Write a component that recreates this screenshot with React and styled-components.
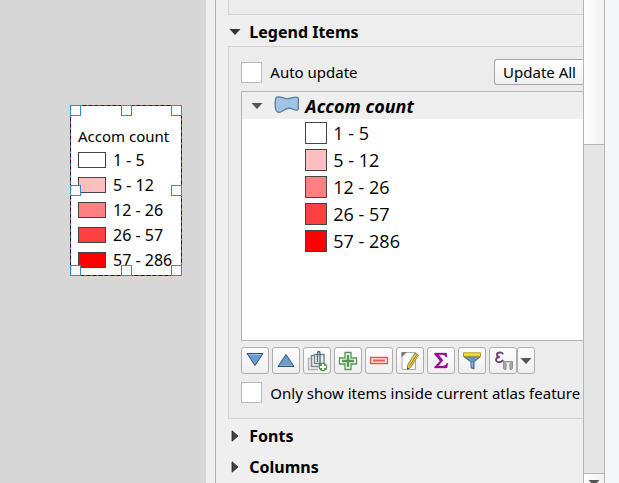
import React, { useState } from "react";
import styled, { createGlobalStyle } from "styled-components";

const Global = createGlobalStyle`
  *, *::before, *::after { box-sizing: border-box; }
  body {
    margin: 0;
    background: #efefef;
    color: #000;
    font: 15px/20px "Noto Sans", "Open Sans", sans-serif;
  }
  button, input { font: inherit; color: inherit; margin: 0; }
`;

const Shell = styled.div`
  display: grid;
  grid-template-columns: minmax(0, 1fr) minmax(0, 2fr);
  height: 100vh;
  overflow: hidden;
`;

const Canvas = styled.main`
  position: relative;
  background: #d7d7d7;
`;

const LegendFrame = styled.section`
  position: absolute;
  left: 70px;
  top: 105px;
  width: 112px;
  padding: 21px 0 4px 8px;
  background: #fff;
`;

const FrameOutline = styled.svg`
  position: absolute;
  inset: 0;
  width: 100%;
  height: 100%;
`;

const Handle = styled.span`
  position: absolute;
  width: 11px;
  height: 11px;
  background: #fff;
  border: 1px solid #2d8fc4;
  ${(p) => ({ left: "left: 0;", center: "left: 51px;", right: "right: 0;" })[p.$x]}
  ${(p) => ({ top: "top: 0;", middle: "top: 80px;", bottom: "bottom: 0;" })[p.$y]}
`;

const LegendTitle = styled.h2`
  margin: 0;
  font-size: 15px;
  font-weight: 400;
  line-height: 21px;
  white-space: nowrap;
`;

const LegendList = styled.ul`
  margin: 0;
  padding: 0;
  list-style: none;
`;

const LegendRow = styled.li`
  display: flex;
  align-items: center;
  gap: 7px;
  height: 25px;
  font-size: 16px;
  white-space: nowrap;
`;

const Swatch = styled.span`
  flex: none;
  width: ${(p) => (p.$wide ? 28 : 22)}px;
  height: ${(p) => (p.$wide ? 16 : 22)}px;
  background: ${(p) => p.$color};
  border: 1px solid #444;
`;

const Dock = styled.aside`
  display: flex;
  min-width: 0;
  padding-left: 9px;
  background: #efefef;
`;

const ScrollArea = styled.div`
  flex: 1;
  min-width: 0;
  padding-left: 12px;
  border-left: 1px solid #b0b0b0;
  overflow: hidden;
`;

const PreviousGroup = styled.div`
  height: 15px;
  background: #ececec;
  border: solid #d3d3d3;
  border-width: 0 0 1px 1px;
`;

const SectionHeader = styled.button`
  display: flex;
  align-items: center;
  gap: 8px;
  width: 100%;
  height: 31px;
  padding: 2px 0 0 1px;
  border: 0;
  background: none;
  font-size: 16px;
  font-weight: 700;
  text-align: left;
`;

const GroupBox = styled.section`
  display: flex;
  flex-direction: column;
  gap: 6px;
  padding: 12px 0 15px 12px;
  background: #ececec;
  border: solid #d3d3d3;
  border-width: 1px 0 1px 1px;
`;

const Row = styled.div`
  display: flex;
  align-items: center;
  justify-content: space-between;
`;

const CheckLabel = styled.label`
  display: flex;
  align-items: center;
  gap: 8px;
  white-space: nowrap;
`;

const AtlasRow = styled(Row)`
  padding-top: 2px;
`;

const CheckBox = styled.input`
  appearance: none;
  flex: none;
  width: 21px;
  height: 21px;
  background: #fff;
  border: 1px solid #bababa;
  &:checked { box-shadow: inset 0 0 0 4px #fff; background: #555; }
`;

const UpdateButton = styled.button`
  height: 26px;
  padding: 0 7px 0 8px;
  border: 1px solid #a6a6a6;
  border-right: 0;
  border-radius: 3px 0 0 3px;
  background: linear-gradient(#fff, #f0f0f0);
  white-space: nowrap;
`;

const Tree = styled.div`
  height: 250px;
  background: #fff;
  border: solid #b4b4b4;
  border-width: 1px 0 1px 1px;
`;

const LayerRow = styled.button`
  display: flex;
  align-items: center;
  width: 100%;
  height: 27px;
  padding: 0 0 0 9px;
  border: 0;
  background: #efefef;
  font: italic 700 18px/24px "Open Sans", "Noto Sans", sans-serif;
  text-align: left;
  white-space: nowrap;
`;

const LayerIcon = styled.svg`
  flex: none;
  width: 26px;
  height: 22px;
  margin: 0 5px 0 11px;
`;

const ClassList = styled.ul`
  margin: 0;
  padding: 0 0 0 63px;
  list-style: none;
`;

const ClassRow = styled.li`
  display: flex;
  align-items: center;
  gap: 6px;
  height: 27px;
  font: 18px/24px "Open Sans", "Noto Sans", sans-serif;
`;

const Toolbar = styled.div`
  display: flex;
  gap: 3px;
`;

const SplitButton = styled.div`
  display: flex;
`;

const ToolButton = styled.button`
  display: grid;
  place-items: center;
  width: ${(p) => (p.$narrow ? 18 : 28)}px;
  height: 27px;
  padding: 0;
  border: 1px solid #adadad;
  border-radius: 3px;
  background: linear-gradient(#fdfdfd, #efefef);
  svg { display: block; }
`;

const ScrollBar = styled.div`
  flex: none;
  display: flex;
  flex-direction: column;
  width: 22px;
  border: solid #b5b5b5;
  border-width: 0 1px;
  background: #e6e6e6;
`;

const Thumb = styled.div`
  flex: 0 0 30%;
  border-bottom: 1px solid #b5b5b5;
  background: linear-gradient(90deg, #fff, #f1f1f1);
`;

const ScrollDown = styled.button`
  height: 10px;
  margin-top: auto;
  padding: 5px 0 0 4px;
  overflow: hidden;
  border: 0;
  border-top: 1px solid #b5b5b5;
  background: linear-gradient(90deg, #fff, #f1f1f1);
  svg { display: block; }
`;

const Edge = styled.div`
  flex: none;
  width: 14px;
  background: #f5f7f9;
`;

const classes = [
  { label: "1 - 5", color: "#ffffff" },
  { label: "5 - 12", color: "#ffbfbf" },
  { label: "12 - 26", color: "#ff8080" },
  { label: "26 - 57", color: "#ff4040" },
  { label: "57 - 286", color: "#ff0000" },
];

const handles = [
  ["left", "top"], ["center", "top"], ["right", "top"],
  ["left", "middle"], ["right", "middle"],
  ["left", "bottom"], ["center", "bottom"], ["right", "bottom"],
];

const ArrowDown = ({ color = "#555" }) => (
  <svg width="12" height="8" viewBox="0 0 12 8" aria-hidden="true">
    <path d="M0.5 1H11.5L6 7Z" fill={color} />
  </svg>
);

const ArrowRight = () => (
  <svg width="12" height="12" viewBox="0 0 12 12" aria-hidden="true">
    <path d="M3 .8V11.2L9 6Z" fill="#444" stroke="#222" strokeWidth=".8" />
  </svg>
);

const Icon = ({ children }) => (
  <svg width="22" height="22" viewBox="0 0 22 22" fill="none" aria-hidden="true">{children}</svg>
);

const tools = [
  {
    name: "Move item down",
    icon: <Icon><path d="M3 3.5H19L11 15.5Z" fill="#6d9bcd" stroke="#2e527c" strokeLinejoin="round" /><path d="M5 4.5H17" stroke="#9cbfe3" /></Icon>,
  },
  {
    name: "Move item up",
    icon: <Icon><path d="M3 16.5H19L11 4.5Z" fill="#6d9bcd" stroke="#2e527c" strokeLinejoin="round" /><path d="M5 15.5H17" stroke="#86b0db" /></Icon>,
  },
  {
    name: "Add group",
    icon: (
      <Icon>
        <path d="M4.5 8.5H2.5V19.5H12" stroke="#b0b0b0" strokeWidth="1.4" />
        <path d="M8 5.5H5.5V16.5H14.5V14" stroke="#888" strokeWidth="1.6" />
        <path d="M8.5 4.5H18V13.5H8.5Z" fill="#eee" stroke="#808080" strokeWidth="1.4" />
        <path d="M11.5 12V4Q11.5 1.5 12.8 1.5T14 4V13Q14 15 12.8 15" stroke="#41698f" strokeWidth="1.3" />
        <circle cx="17" cy="17" r="4.3" fill="#5b9b54" />
        <path d="M17 14V20M14 17H20" stroke="#fff" strokeWidth="2" />
      </Icon>
    ),
  },
  {
    name: "Add layer",
    icon: (
      <Icon>
        <path d="M8 2.5H14V8H19.5V14H14V19.5H8V14H2.5V8H8Z" fill="#f3f9f1" stroke="#579654" strokeWidth="1.3" />
        <path d="M11 5V17M5 11H17" stroke="#579654" strokeWidth="2.4" />
      </Icon>
    ),
  },
  {
    name: "Remove item",
    icon: <Icon><path d="M2.5 7.5H19.5V13.5H2.5Z" fill="#ffeaea" stroke="#f05050" strokeWidth="1.3" /><path d="M5 10.5H17" stroke="#ef5555" strokeWidth="2" /></Icon>,
  },
  {
    name: "Edit item",
    icon: (
      <Icon>
        <path d="M3 2.5H16.5V19.5H3Z" fill="#fff" stroke="#aaa" />
        <path d="M3 2.5H7L3 6.5Z" fill="#777" stroke="#777" />
        <path d="M16 3L19.5 5L12 17L8.5 19.5L8.7 15Z" fill="#e8d050" stroke="#998234" />
        <path d="M17.8 4.5L10.5 16" stroke="#9b8130" />
        <path d="M8.5 17.3L10 18.4L8.5 19.5Z" fill="#333" />
      </Icon>
    ),
  },
  {
    name: "Show feature count",
    icon: <Icon><path d="M4.5 3H16.5L17 7H15.8Q15 4.8 13 4.8H8.6L13 10.3L8.2 16H13.5Q16 16 16.8 13.3H18L17 18H4.5V17L10 11L4.5 4.2Z" fill="#9c0b9c" stroke="#800080" strokeWidth=".3" /></Icon>,
  },
  {
    name: "Filter by map content",
    icon: (
      <Icon>
        <path d="M2.5 6.5H19.5L13 12V19L10 17.8V12Z" fill="#6592c4" stroke="#41698f" strokeLinejoin="round" />
        <path d="M11.2 12.5V17" stroke="#a8c9e8" />
        <path d="M2.5 2.8H19.5V6.3H2.5Z" fill="#f6df42" stroke="#b59a23" />
      </Icon>
    ),
  },
];

const ExpressionIcon = () => (
  <Icon>
    <path d="M11 4.3Q10 2.2 7.5 2.5C4 2.8 4 6.9 8 7.1C3 7 2.7 12 7 12.2Q10 12.4 11 9.8" stroke="#69406f" strokeWidth="1.8" />
    <path d="M11.5 11.5H20.5V18.5L19.5 19.5H18V15H14V19.5H12.5L11.5 18.5Z" fill="#a5a5a5" stroke="#929292" />
    <path d="M13.5 12.5H18.5L17 14.5V19H15V14.5Z" fill="#efefef" />
  </Icon>
);

function PrintLegend() {
  return (
    <LegendFrame aria-label="Map legend">
      <LegendTitle>Accom count</LegendTitle>
      <LegendList>
        {classes.map((c) => (
          <LegendRow key={c.label}><Swatch $wide $color={c.color} />{c.label}</LegendRow>
        ))}
      </LegendList>
      <FrameOutline viewBox="0 0 112 171" preserveAspectRatio="none" aria-hidden="true">
        <rect x=".5" y=".5" width="111" height="170" fill="none" stroke="#2d8fc4" />
        <rect x=".5" y=".5" width="111" height="170" fill="none" stroke="#4d0030" strokeDasharray="4 2" />
      </FrameOutline>
      {handles.map(([x, y]) => <Handle key={x + y} $x={x} $y={y} />)}
    </LegendFrame>
  );
}

export default function App() {
  const [open, setOpen] = useState(true);
  const [expanded, setExpanded] = useState(true);
  return (
    <>
      <Global />
      <Shell>
        <Canvas><PrintLegend /></Canvas>
        <Dock>
          <ScrollArea>
            <PreviousGroup />
            <SectionHeader aria-expanded={open} onClick={() => setOpen(!open)}>
              {open ? <ArrowDown color="#333" /> : <ArrowRight />}Legend Items
            </SectionHeader>
            {open && (
              <GroupBox>
                <Row>
                  <CheckLabel><CheckBox type="checkbox" />Auto update</CheckLabel>
                  <UpdateButton>Update All</UpdateButton>
                </Row>
                <Tree>
                  <LayerRow aria-expanded={expanded} onClick={() => setExpanded(!expanded)}>
                    <ArrowDown />
                    <LayerIcon viewBox="0 0 26 22" aria-hidden="true">
                      <path d="M2.5 2.2C6 .5 9 3.6 13 3.8C17 4 20 1 24 2.6C25.5 5 23.5 9 24.4 13C24.6 16 21.5 15.5 18.5 14C14 11.5 11 14.5 7.5 16.5C4 18.5 1.5 16.5 1.3 12C1 8 .8 5 2.5 2.2Z" fill="#a3c5e5" stroke="#557f9e" strokeWidth="1.3" />
                    </LayerIcon>
                    Accom count
                  </LayerRow>
                  {expanded && (
                    <ClassList>
                      {classes.map((c) => (
                        <ClassRow key={c.label}><Swatch $color={c.color} />{c.label}</ClassRow>
                      ))}
                    </ClassList>
                  )}
                </Tree>
                <Toolbar role="toolbar" aria-label="Legend item tools">
                  {tools.map((t) => <ToolButton key={t.name} aria-label={t.name}>{t.icon}</ToolButton>)}
                  <SplitButton>
                    <ToolButton aria-label="Filter by expression"><ExpressionIcon /></ToolButton>
                    <ToolButton $narrow aria-label="Expression options"><ArrowDown /></ToolButton>
                  </SplitButton>
                </Toolbar>
                <AtlasRow>
                  <CheckLabel><CheckBox type="checkbox" />Only show items inside current atlas feature</CheckLabel>
                </AtlasRow>
              </GroupBox>
            )}
            <SectionHeader aria-expanded="false"><ArrowRight />Fonts</SectionHeader>
            <SectionHeader aria-expanded="false"><ArrowRight />Columns</SectionHeader>
          </ScrollArea>
          <ScrollBar>
            <Thumb />
            <ScrollDown aria-label="Scroll down"><ArrowDown /></ScrollDown>
          </ScrollBar>
          <Edge />
        </Dock>
      </Shell>
    </>
  );
}
